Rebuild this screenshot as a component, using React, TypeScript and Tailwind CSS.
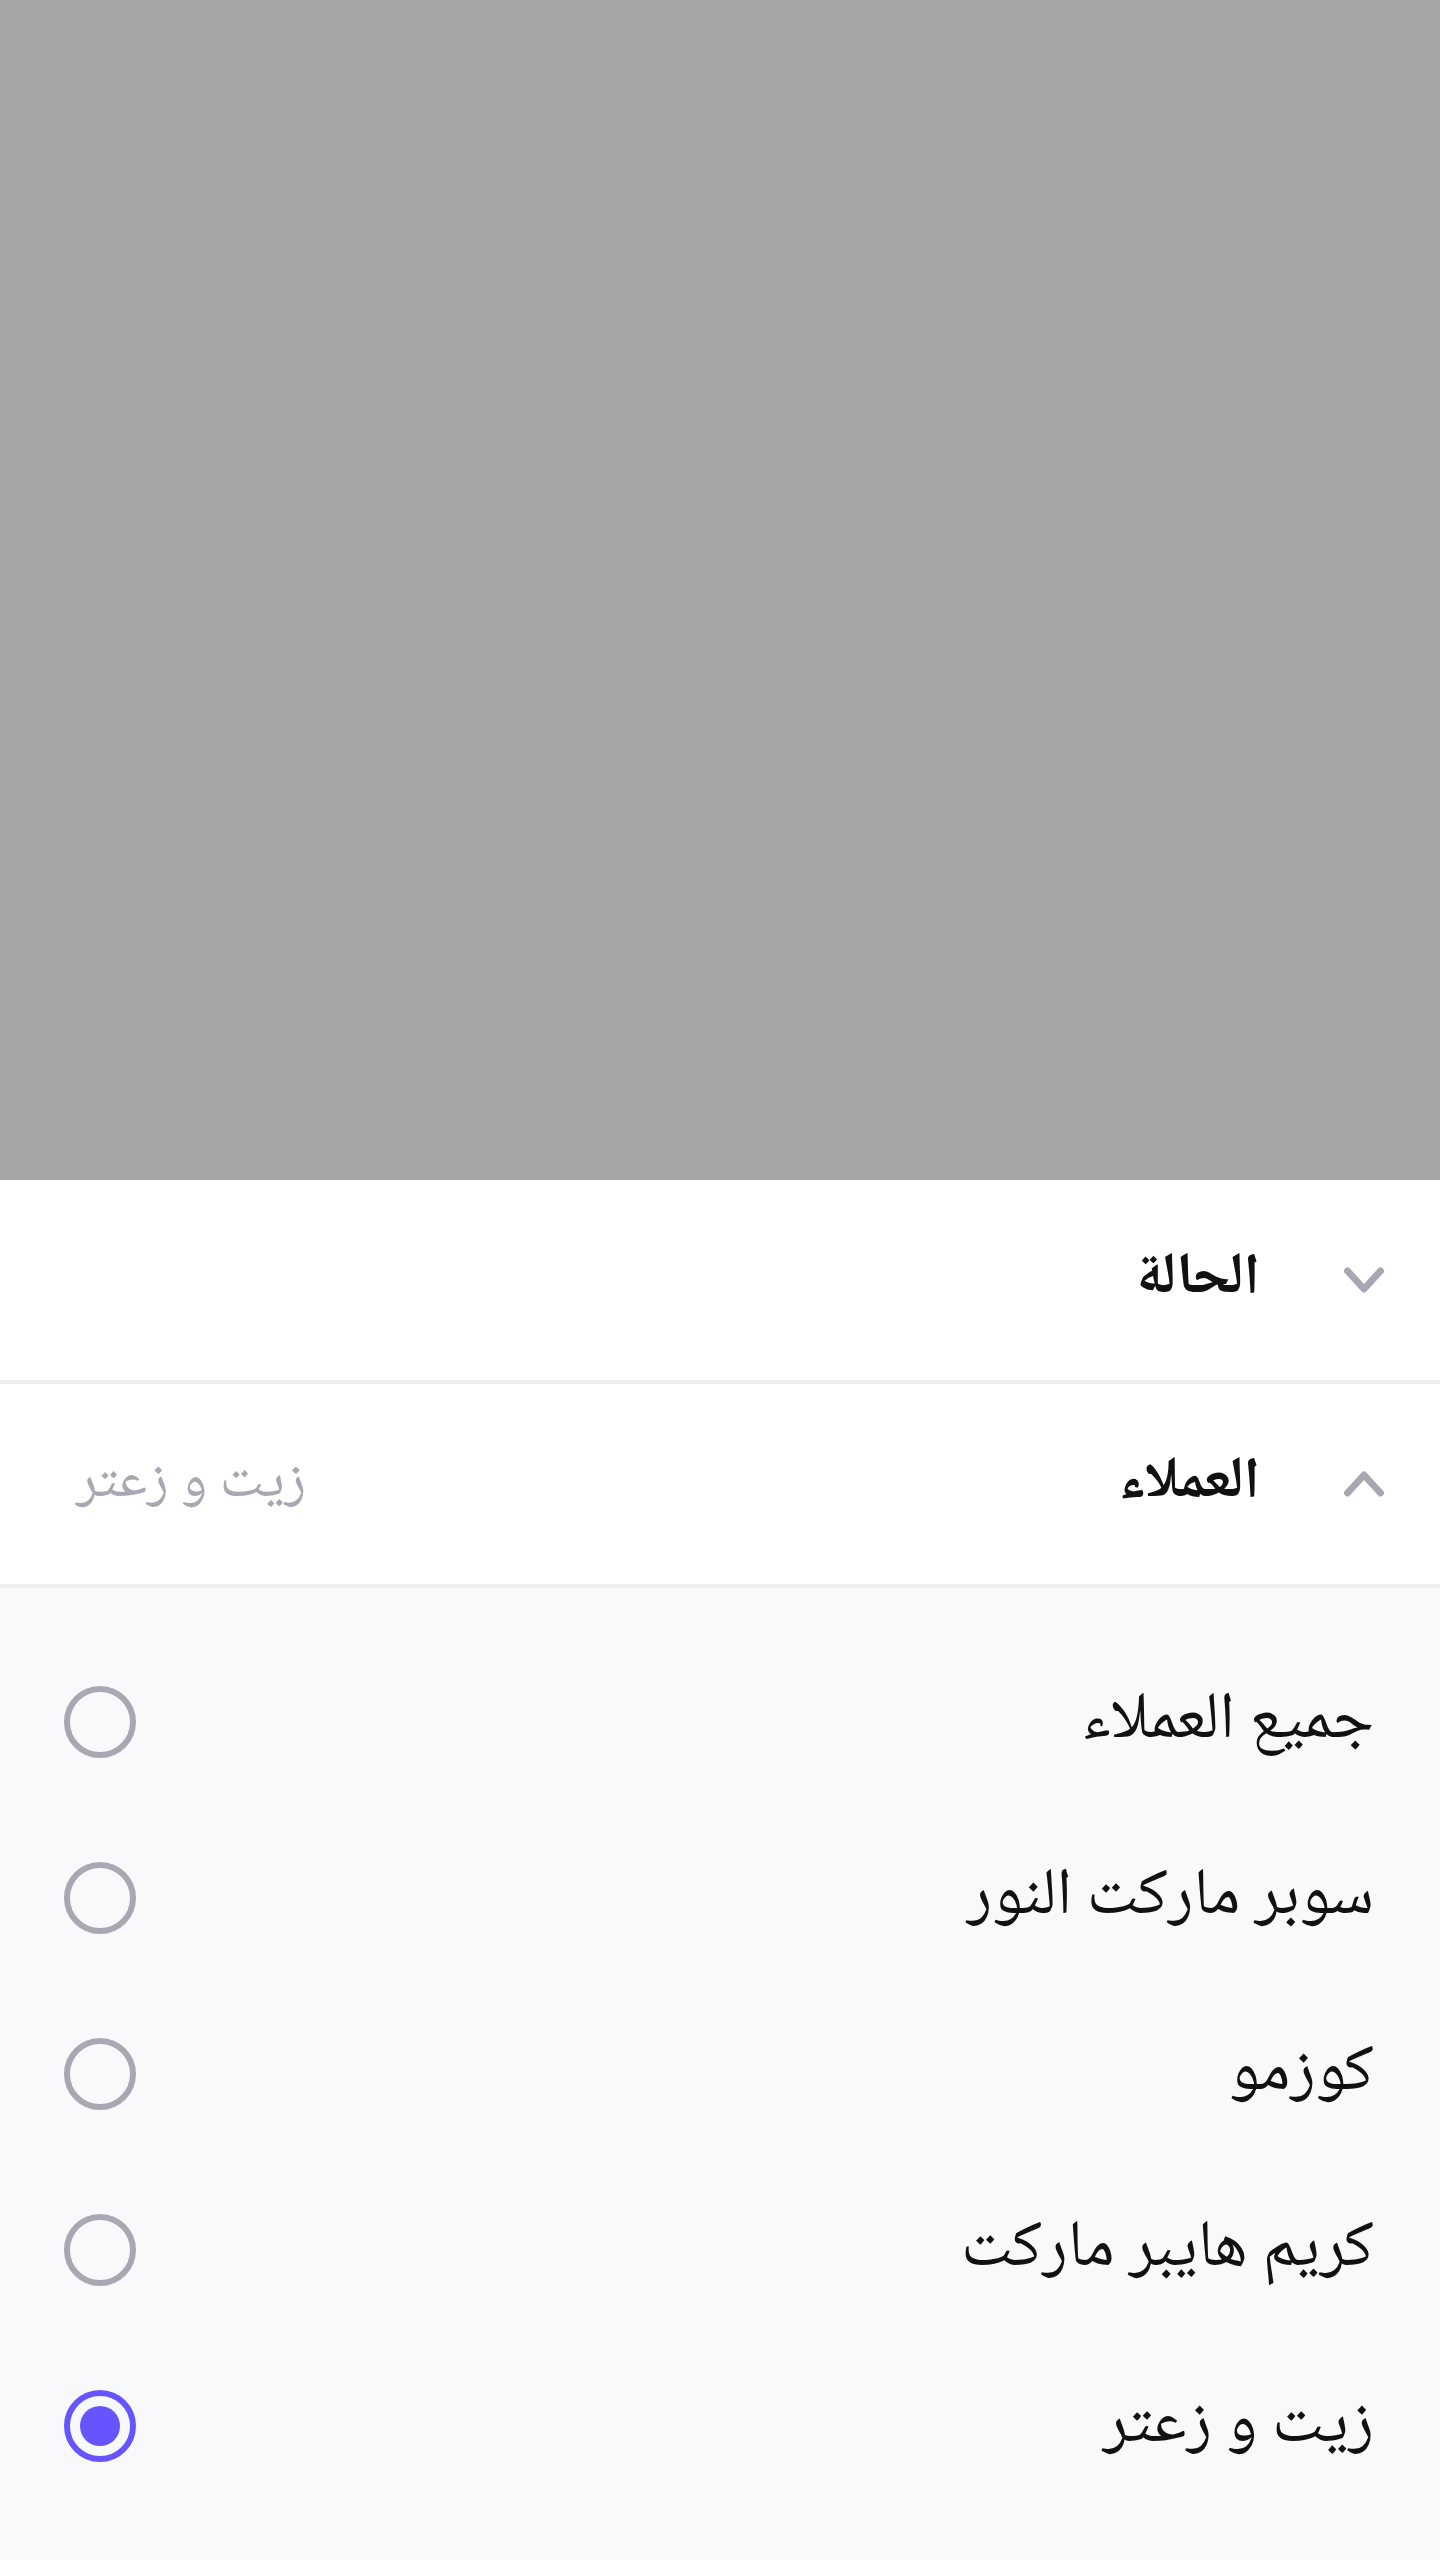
import React from "react";

const items = ["جميع العملاء", "سوبر ماركت النور", "كوزمو", "كريم هايبر ماركت", "زيت و زعتر"];

function Chevron({ up }: { up?: boolean }) {
  return (
    <svg width="40" height="26" viewBox="0 0 40 26" className="shrink-0">
      <path
        d={up ? "M3.5 22 L20 4 L36.5 22" : "M3.5 4 L20 22 L36.5 4"}
        fill="none"
        stroke="#a8a8b3"
        strokeWidth="7"
        strokeLinecap="round"
        strokeLinejoin="round"
      />
    </svg>
  );
}

export default function App() {
  return (
    <div dir="rtl" className="w-[1440px] h-[2560px] flex flex-col overflow-hidden font-['Noto_Naskh_Arabic','DejaVu_Sans',sans-serif]">
      <div className="h-[1180px] bg-[#a6a6a6] shrink-0" />
      <div className="h-[200px] bg-white flex items-center pr-[56px] pl-[76px] gap-[84px] border-b-4 border-[#efefef] box-content shrink-0">
        <Chevron />
        <span className="text-[58px] font-bold text-[#111111]">الحالة</span>
      </div>
      <div className="h-[200px] bg-white flex items-center pr-[56px] pl-[76px] gap-[84px] border-b-4 border-[#efefef] box-content shrink-0">
        <Chevron up />
        <span className="text-[58px] font-bold text-[#111111]">العملاء</span>
        <span className="mr-auto text-[56px] text-[#a8a8b3]">زيت و زعتر</span>
      </div>
      <div className="flex-1 bg-[#f8f9fb] pt-[46px] flex flex-col">
        {items.map((t, i) => {
          const sel = i === items.length - 1;
          return (
            <div key={t} className="h-[176px] flex items-center justify-between pr-[66px] pl-[64px]">
              <span className="text-[66px] text-[#111111]">{t}</span>
              {sel ? (
                <span className="w-[72px] h-[72px] rounded-full border-[6px] border-[#6655ff] flex items-center justify-center">
                  <span className="w-[40px] h-[40px] rounded-full bg-[#6655ff]" />
                </span>
              ) : (
                <span className="w-[72px] h-[72px] rounded-full border-[6px] border-[#a8a8b3]" />
              )}
            </div>
          );
        })}
      </div>
    </div>
  );
}
